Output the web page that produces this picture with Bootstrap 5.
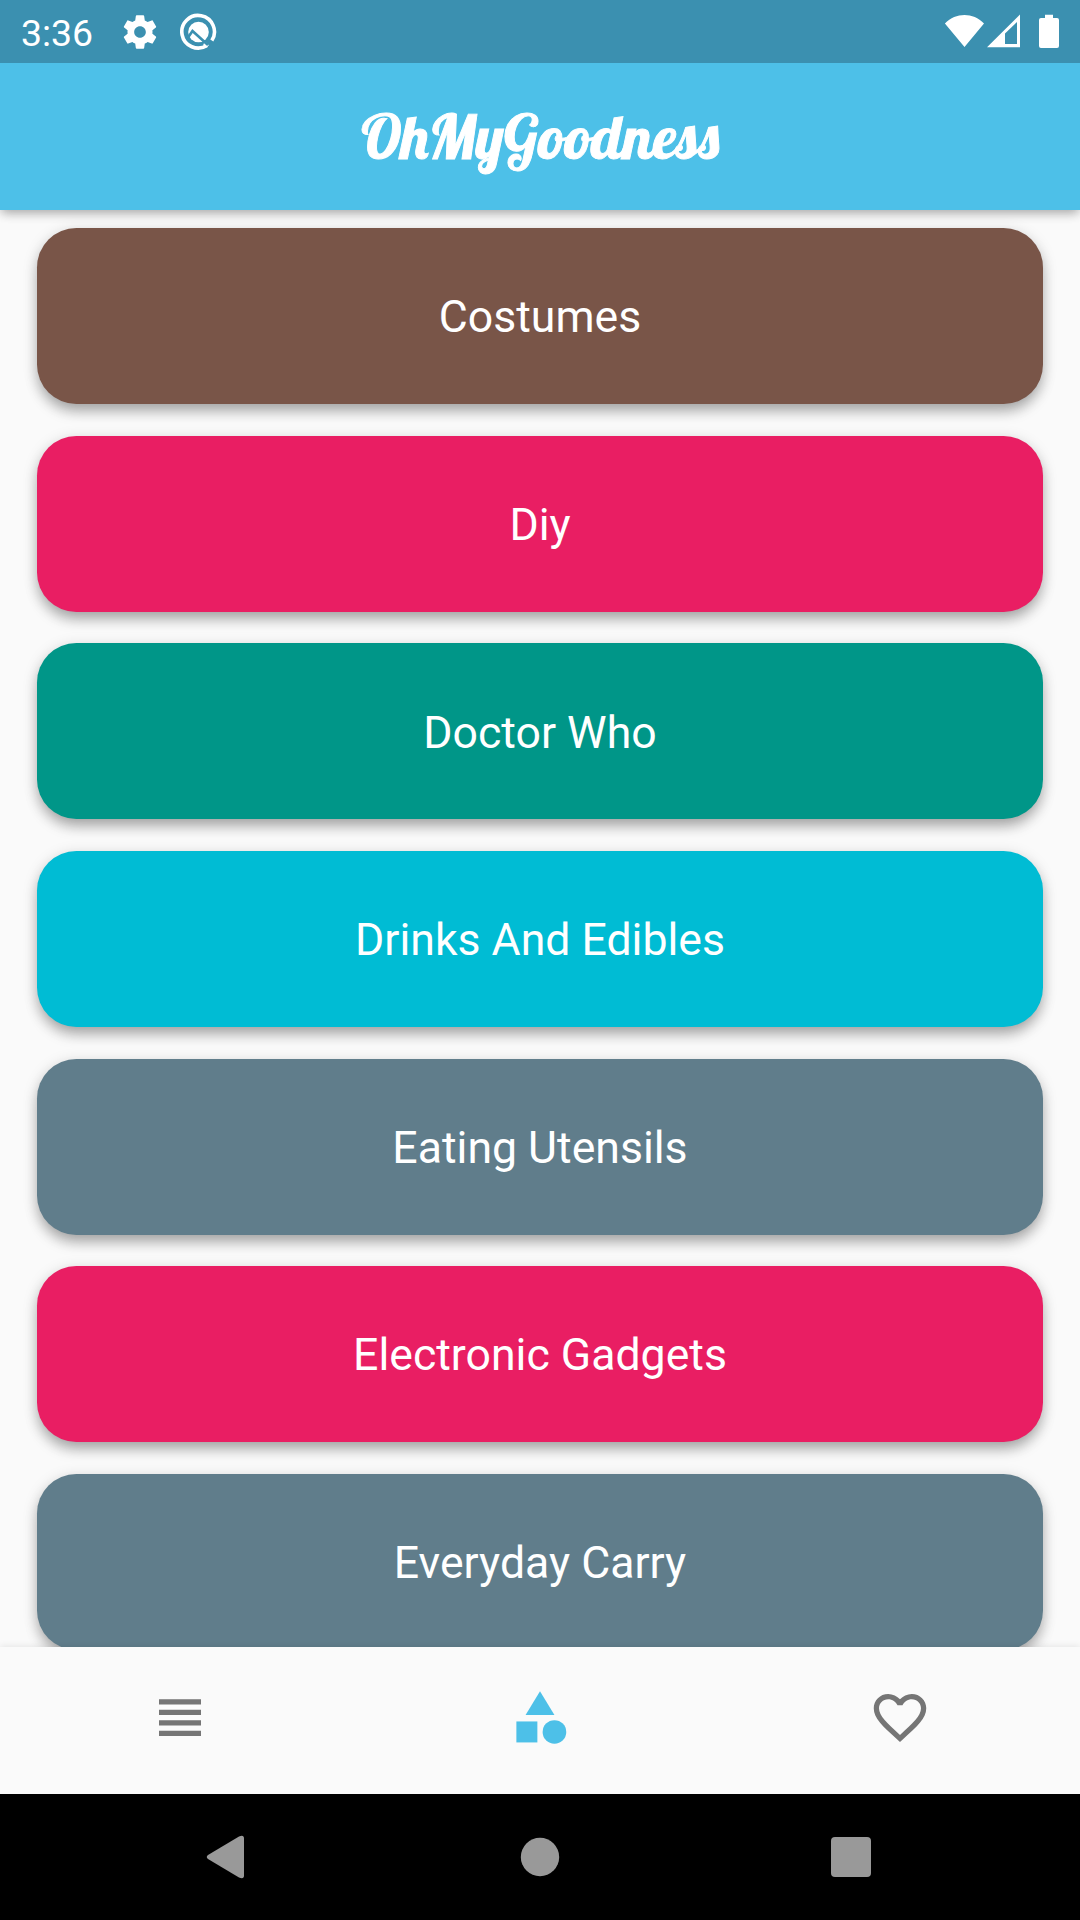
<!DOCTYPE html>
<html lang="en">
<head>
<meta charset="utf-8">
<meta name="viewport" content="width=device-width, initial-scale=1">
<title>OhMyGoodness</title>
<link href="https://cdn.jsdelivr.net/npm/bootstrap@5.3.0/dist/css/bootstrap.min.css" rel="stylesheet">
<style>
body{font-family:Roboto,"Liberation Sans",sans-serif;background:#fafafa;overflow:hidden}
svg{display:block}
.screen{width:1080px;height:1920px}
.status{height:63px;background:#3b90b0;padding:0 20px 0 21px;font-size:37.4px;z-index:3}
.clock{line-height:63px;width:98.5px;padding-top:3px}
.appbar{height:147px;background:#4dc0e8;z-index:2;box-shadow:0 5px 10px -2px rgba(0,0,0,.24),0 2px 11px rgba(0,0,0,.14)}
.logo{font-family:Lobster,"Liberation Serif",serif;font-size:60.375px;line-height:1;padding-top:1px;-webkit-text-stroke:.9px #fff}
.cats{padding:18.3px 36.75px 0;gap:31.7px}
.cat{height:175.9px;padding-top:3.4px;border-radius:39.4px;font-size:44.6px;box-shadow:0 9px 14px -2px rgba(0,0,0,.27),0 3px 15px rgba(0,0,0,.15)}
.brown{background:#795548}.pink{background:#e91e63}.teal{background:#009688}.cyan{background:#00bcd4}.slate{background:#607d8b}
.tabs{height:147px;background:#fafafa;z-index:2;padding-bottom:6px;color:#757575;box-shadow:0 -1px 7px rgba(0,0,0,.09)}
.tabs .on{color:#4dc0e8}
.sysnav{height:126px;background:#000;z-index:3}
</style>
</head>
<body>
<div class="screen d-flex flex-column overflow-hidden">
  <div class="status d-flex align-items-center position-relative text-white flex-shrink-0">
    <span class="clock">3:36</span>
    <svg width="40" height="40" viewBox="0 0 24 24" fill="#fff"><path d="M19.43 12.98c.04-.32.07-.64.07-.98s-.03-.66-.07-.98l2.11-1.65c.19-.15.24-.42.12-.64l-2-3.46c-.12-.22-.39-.3-.61-.22l-2.49 1c-.52-.4-1.08-.73-1.69-.98l-.38-2.65C14.46 2.18 14.25 2 14 2h-4c-.25 0-.46.18-.49.42l-.38 2.65c-.61.25-1.17.59-1.69.98l-2.49-1c-.23-.09-.49 0-.61.22l-2 3.46c-.13.22-.07.49.12.64l2.11 1.65c-.04.32-.07.65-.07.98s.03.66.07.98l-2.11 1.65c-.19.15-.24.42-.12.64l2 3.46c.12.22.39.3.61.22l2.49-1c.52.4 1.08.73 1.69.98l.38 2.65c.03.24.24.42.49.42h4c.25 0 .46-.18.49-.42l.38-2.65c.61-.25 1.17-.59 1.69-.98l2.49 1c.23.09.49 0 .61-.22l2-3.46c.12-.22.07-.49-.12-.64l-2.11-1.65zM12 15.5c-1.93 0-3.5-1.57-3.5-3.5s1.57-3.5 3.5-3.5 3.5 1.57 3.5 3.5-1.57 3.5-3.5 3.5z"/></svg>
    <svg class="ms-3" width="44" height="40" viewBox="0 0 44 40" fill="none" stroke="#fff"><path d="M31 33.400A16.300 16.300 0 1 1 35.800 28.600" stroke-width="3.600"/><path d="M28.500 31l3 3.500" stroke-width="3.600"/><circle cx="22.500" cy="20" r="10.300" fill="#fff" stroke="none"/><path d="M12 25.500l4.500-6.500L32 33" stroke="#3b90b0" stroke-width="2.600"/></svg>
    <svg class="ms-auto" width="116" height="36" viewBox="0 0 116 36" fill="#fff"><path d="M.9 9.500C12 -1.800 29 -1.800 40 9.500L20.500 33zM43 33.200L76 .5V33.200z"/><path d="M61 19.500L73 8V30H61z" fill="#3b90b0"/><path d="M97 4h4V.700h8V4h4q2 0 2 2v26q0 2-2 2H97q-2 0-2-2V6q0-2 2-2z"/></svg>
  </div>
  <header class="appbar d-flex align-items-center justify-content-center position-relative text-white flex-shrink-0"><div class="logo">OhMyGoodness</div></header>
  <main class="cats d-flex flex-column flex-grow-1 overflow-hidden text-white">
    <div class="cat brown d-flex align-items-center justify-content-center flex-shrink-0">Costumes</div>
    <div class="cat pink d-flex align-items-center justify-content-center flex-shrink-0">Diy</div>
    <div class="cat teal d-flex align-items-center justify-content-center flex-shrink-0">Doctor Who</div>
    <div class="cat cyan d-flex align-items-center justify-content-center flex-shrink-0">Drinks And Edibles</div>
    <div class="cat slate d-flex align-items-center justify-content-center flex-shrink-0">Eating Utensils</div>
    <div class="cat pink d-flex align-items-center justify-content-center flex-shrink-0">Electronic Gadgets</div>
    <div class="cat slate d-flex align-items-center justify-content-center flex-shrink-0">Everyday Carry</div>
  </main>
  <nav class="tabs row g-0 align-items-center position-relative flex-shrink-0">
    <div class="col d-flex justify-content-center"><svg width="64" height="63" viewBox="0 0 24 24" fill="currentColor"><path d="M4 15h16v-2H4v2zm0 4h16v-2H4v2zm0-8h16V9H4v2zm0-6v2h16V5H4z"/></svg></div>
    <div class="col d-flex justify-content-center on"><svg width="64" height="63" viewBox="0 0 24 24" fill="currentColor"><path d="M12 2l-5.500 9h11z"/><circle cx="17.500" cy="17.500" r="4.500"/><path d="M3 13.500h8v8H3z"/></svg></div>
    <div class="col d-flex justify-content-center"><svg width="64" height="63" viewBox="0 0 24 24" fill="currentColor"><path d="M16.500 3c-1.740 0-3.410.81-4.500 2.090C10.910 3.810 9.240 3 7.500 3 4.420 3 2 5.420 2 8.500c0 3.780 3.400 6.860 8.550 11.540L12 21.350l1.450-1.320C18.600 15.360 22 12.280 22 8.500 22 5.420 19.580 3 16.500 3zm-4.400 15.550l-.1.100-.1-.1C7.140 14.240 4 11.390 4 8.500 4 6.500 5.500 5 7.500 5c1.540 0 3.040.99 3.570 2.360h1.870C13.460 5.990 14.960 5 16.500 5c2 0 3.500 1.500 3.500 3.500 0 2.890-3.140 5.740-7.900 10.050z"/></svg></div>
  </nav>
  <div class="sysnav d-flex justify-content-center position-relative flex-shrink-0">
    <svg width="680" height="126" viewBox="200 0 680 126" fill="#999"><path d="M208 61l31-18.500q5-2 5 2v37q0 4-5 2L208 65q-2.500-2 0-4z"/><circle cx="540" cy="63" r="19.200"/><rect x="831" y="43" width="40" height="40" rx="4"/></svg>
  </div>
</div>
<script src="https://cdn.jsdelivr.net/npm/bootstrap@5.3.0/dist/js/bootstrap.bundle.min.js"></script>
</body>
</html>
